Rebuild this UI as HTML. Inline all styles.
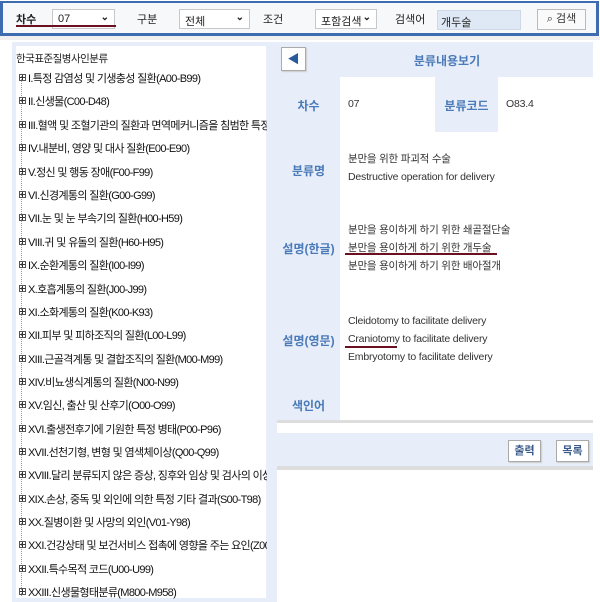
<!DOCTYPE html><html><head><meta charset="utf-8"><style>
*{margin:0;padding:0;box-sizing:border-box}
body{width:600px;height:600px;overflow:hidden;background:#fff;font-family:"Liberation Sans","Noto Sans CJK KR",sans-serif;font-size:12px;color:#222;position:relative}
.a{position:absolute}
.top{left:0;top:1px;width:599px;height:35px;border:3px solid #3d6cb0;border-top-width:2px;background:#f7f8fa}
.lbl{font-size:11px;color:#222;top:11px}
.sel{top:9px;height:20px;border:1px solid #c8c8c8;background:#fff;font-size:11px;padding:3px 5px;white-space:nowrap}
.sel b{position:absolute;right:5px;top:2px;font-size:10px}
.lp{left:12px;top:42px;width:259px;height:560px;border:4px solid #e8eef9;border-right-width:5px;background:#fff}
.tr{left:19px;font-size:11px;letter-spacing:-0.65px;white-space:nowrap;width:248px;overflow:hidden;color:#111}
.tr i{display:inline-block;width:7px;height:7px;border:1px solid #555;position:relative;margin-right:2px;vertical-align:1px}
.tr i:before{content:"";position:absolute;left:0;top:2px;width:5px;height:1px;background:#333}
.tr i:after{content:"";position:absolute;left:2px;top:0;width:1px;height:5px;background:#333}
.rp{left:277px;top:42px;width:316px;background:#e8eef9}
.lab{color:#4a7ab8;font-weight:bold;font-size:12px;text-align:center}
.val{font-size:10.5px;color:#333;line-height:18px;letter-spacing:-0.2px}
.btn{border:1px solid #aaa;background:#fff;font-size:11px;color:#3a5a8a;font-weight:bold;text-align:center;line-height:20px;box-shadow:1px 1px 1px #ccc}
.ul{height:2px;background:#6b1020}
</style></head><body>
<div class="a top"></div>
<div class="a" style="left:0;top:36px;width:600px;height:4px;background:#f0f0f0"></div>
<div class="a lbl" style="left:16px;font-weight:bold">차수</div>
<div class="a sel" style="left:52px;width:63px">07<b>⌄</b></div>
<div class="a ul" style="left:16px;top:25px;width:100px"></div>
<div class="a lbl" style="left:137px">구분</div>
<div class="a sel" style="left:179px;width:71px">전체<b>⌄</b></div>
<div class="a lbl" style="left:263px">조건</div>
<div class="a sel" style="left:315px;width:62px">포함검색<b>⌄</b></div>
<div class="a lbl" style="left:395px">검색어</div>
<div class="a" style="left:437px;top:10px;width:84px;height:20px;background:#dfe8f5;border:1px solid #cfd8e6;font-size:11px;padding:3px 3px">개두술</div>
<div class="a" style="left:537px;top:9px;width:49px;height:21px;border:1px solid #bbb;background:#fafafa;font-size:11px;text-align:center;line-height:19px;color:#333">⌕ 검색</div>

<div class="a lp"></div>
<div class="a" style="left:16px;top:51px;font-size:10.5px;letter-spacing:-0.5px">한국표준질병사인분류</div>
<div class="a" style="left:21px;top:76px;width:1px;height:520px;border-left:1px dotted #999"></div>
<div class="a tr" style="top:70px"><i></i>I.특정 감염성 및 기생충성 질환(A00-B99)</div>
<div class="a tr" style="top:93px"><i></i>II.신생물(C00-D48)</div>
<div class="a tr" style="top:117px"><i></i>III.혈액 및 조혈기관의 질환과 면역메커니즘을 침범한 특정 장애</div>
<div class="a tr" style="top:140px"><i></i>IV.내분비, 영양 및 대사 질환(E00-E90)</div>
<div class="a tr" style="top:164px"><i></i>V.정신 및 행동 장애(F00-F99)</div>
<div class="a tr" style="top:187px"><i></i>VI.신경계통의 질환(G00-G99)</div>
<div class="a tr" style="top:210px"><i></i>VII.눈 및 눈 부속기의 질환(H00-H59)</div>
<div class="a tr" style="top:234px"><i></i>VIII.귀 및 유돌의 질환(H60-H95)</div>
<div class="a tr" style="top:257px"><i></i>IX.순환계통의 질환(I00-I99)</div>
<div class="a tr" style="top:281px"><i></i>X.호흡계통의 질환(J00-J99)</div>
<div class="a tr" style="top:304px"><i></i>XI.소화계통의 질환(K00-K93)</div>
<div class="a tr" style="top:327px"><i></i>XII.피부 및 피하조직의 질환(L00-L99)</div>
<div class="a tr" style="top:351px"><i></i>XIII.근골격계통 및 결합조직의 질환(M00-M99)</div>
<div class="a tr" style="top:374px"><i></i>XIV.비뇨생식계통의 질환(N00-N99)</div>
<div class="a tr" style="top:397px"><i></i>XV.임신, 출산 및 산후기(O00-O99)</div>
<div class="a tr" style="top:421px"><i></i>XVI.출생전후기에 기원한 특정 병태(P00-P96)</div>
<div class="a tr" style="top:444px"><i></i>XVII.선천기형, 변형 및 염색체이상(Q00-Q99)</div>
<div class="a tr" style="top:467px"><i></i>XVIII.달리 분류되지 않은 증상, 징후와 임상 및 검사의 이상:</div>
<div class="a tr" style="top:491px"><i></i>XIX.손상, 중독 및 외인에 의한 특정 기타 결과(S00-T98)</div>
<div class="a tr" style="top:514px"><i></i>XX.질병이환 및 사망의 외인(V01-Y98)</div>
<div class="a tr" style="top:537px"><i></i>XXI.건강상태 및 보건서비스 접촉에 영향을 주는 요인(Z00-Z99)</div>
<div class="a tr" style="top:561px"><i></i>XXII.특수목적 코드(U00-U99)</div>
<div class="a tr" style="top:584px"><i></i>XXIII.신생물형태분류(M800-M958)</div>

<div class="a" style="left:271px;top:42px;width:6px;height:560px;background:#e8eef9"></div>
<div class="a rp" style="height:35px"></div>
<div class="a" style="left:281px;top:47px;width:25px;height:24px;border:1px solid #aaa;background:#fff;box-shadow:1px 1px 1px #ccc;color:#2a5a9a;font-size:12px;text-align:center;line-height:22px">◀</div>
<div class="a lab" style="left:400px;top:52px;width:94px">분류내용보기</div>
<div class="a" style="left:340px;top:77px;width:253px;height:343px;background:#fff"></div>
<div class="a" style="left:277px;top:77px;width:63px;height:343px;background:#e8eef9"></div>
<div class="a" style="left:435px;top:77px;width:63px;height:55px;background:#e8eef9"></div>
<div class="a lab" style="left:277px;top:97px;width:63px">차수</div>
<div class="a val" style="left:348px;top:95px">07</div>
<div class="a lab" style="left:435px;top:97px;width:63px">분류코드</div>
<div class="a val" style="left:506px;top:95px">O83.4</div>
<div class="a lab" style="left:277px;top:162px;width:63px">분류명</div>
<div class="a val" style="left:348px;top:150px">분만을 위한 파괴적 수술<br>Destructive operation for delivery</div>
<div class="a lab" style="left:277px;top:240px;width:63px">설명(한글)</div>
<div class="a val" style="left:348px;top:221px">분만을 용이하게 하기 위한 쇄골절단술<br>분만을 용이하게 하기 위한 개두술<br>분만을 용이하게 하기 위한 배아절개</div>
<div class="a ul" style="left:345px;top:253px;width:152px"></div>
<div class="a lab" style="left:277px;top:332px;width:63px">설명(영문)</div>
<div class="a val" style="left:348px;top:312px">Cleidotomy to facilitate delivery<br>Craniotomy to facilitate delivery<br>Embryotomy to facilitate delivery</div>
<div class="a ul" style="left:345px;top:346px;width:52px"></div>
<div class="a lab" style="left:277px;top:397px;width:63px">색인어</div>
<div class="a" style="left:277px;top:420px;width:316px;height:3px;background:#ddd"></div>
<div class="a" style="left:277px;top:423px;width:316px;height:10px;background:#fff"></div>
<div class="a" style="left:277px;top:433px;width:316px;height:33px;background:#e8eef9"></div>
<div class="a" style="left:277px;top:466px;width:316px;height:4px;background:#ddd"></div>
<div class="a" style="left:277px;top:470px;width:323px;height:130px;background:#fff"></div>
<div class="a btn" style="left:508px;top:440px;width:33px;height:22px">출력</div>
<div class="a btn" style="left:556px;top:440px;width:33px;height:22px">목록</div>
</body></html>
